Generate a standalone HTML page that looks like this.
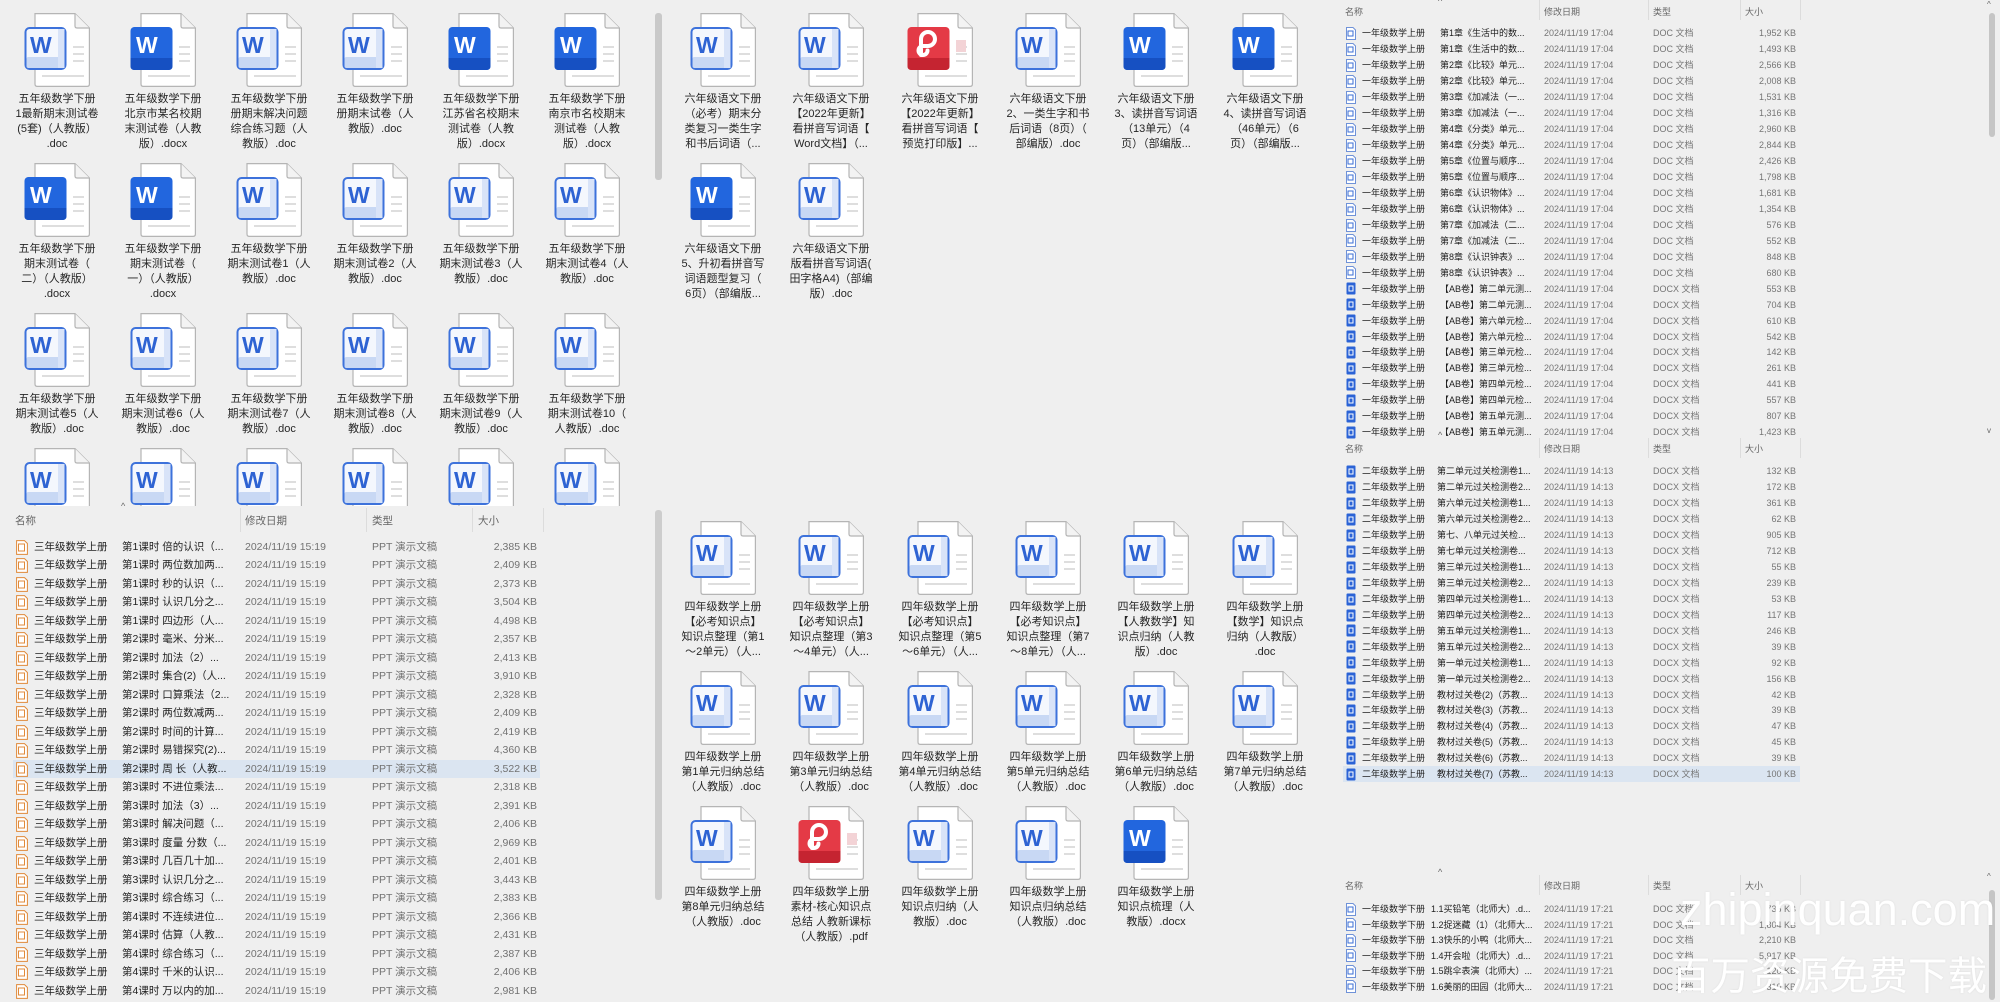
<!DOCTYPE html>
<html><head><meta charset="utf-8">
<style>
*{box-sizing:border-box}
body{margin:0;width:2000px;height:1000px;background:#efefef;position:relative;overflow:hidden;font-family:"Liberation Sans","Noto Sans CJK SC",sans-serif;color:#222}
.a{position:absolute}
.ic{position:absolute;width:66px;height:74px}
.lb{position:absolute;width:100px;text-align:center;font-size:11px;line-height:15px;color:#262626;white-space:nowrap}
.r{position:absolute;left:0;height:18px;white-space:nowrap}
.r>*{position:absolute;top:0;font-style:normal;font-weight:normal;text-decoration:none;quotes:none}
.r q:before,.r q:after{content:none}
.r svg{top:2px}
.L{position:absolute;left:0;top:0;width:660px;height:1000px;font-size:10.5px}
.L .r{height:18.5px;line-height:18.5px;width:545px}
.L svg{left:16px;width:12px;height:15px}
.L b{left:34px;color:#1e1e1e}.L u{left:122px;color:#1e1e1e}
.L em{left:245px;color:#727272}.L s{left:372px;color:#727272}
.L q{left:477px;width:60px;text-align:right;color:#727272}
.R{position:absolute;left:1330px;top:0;width:670px;height:1000px;font-size:9px}
.R .r{height:16px;line-height:16px;width:470px}
.R svg{left:16px;width:10px;height:13px;top:1.5px}
.R b{left:32px;color:#1e1e1e}.R u{left:110px;color:#1e1e1e}
.R em{left:214px;color:#757575}.R s{left:323px;color:#757575}
.R q{left:406px;width:60px;text-align:right;color:#757575}
.R .m u{left:107px}.R .bt u{left:101px}
.hd{position:absolute;color:#666;white-space:nowrap}
.sep{position:absolute;width:1px;background:#dcdcdc}
.sel{background:#dbe5f1}
</style></head><body>
<svg width="0" height="0" style="position:absolute">
<defs>
<symbol id="pg" viewBox="0 0 66 74">
<path d="M11 0.6H51L65.4 15V71Q65.4 73.4 63 73.4H13.4Q11 73.4 11 71Z" fill="#fff" stroke="#b5b5b5" stroke-width="1.2"/>
<path d="M51 0.6V13Q51 15 53 15H65.4" fill="#f3f3f3" stroke="#b5b5b5" stroke-width="1.2"/>
<rect x="49" y="33" width="11" height="2" fill="#dedede"/><rect x="49" y="40" width="11" height="2" fill="#dedede"/><rect x="49" y="47" width="11" height="2" fill="#dedede"/><rect x="18" y="62" width="42" height="2" fill="#dedede"/>
</symbol>
<symbol id="wl" viewBox="0 0 66 74">
<use href="#pg"/>
<rect x="1.5" y="15" width="40" height="41" rx="4" fill="#f4f7fd" stroke="#3d72db" stroke-width="2"/>
<rect x="2.5" y="44" width="38" height="11" rx="2" fill="#c8d8f4"/>
<rect x="34" y="16" width="6.5" height="39" fill="#d8e3f8"/>
<text x="6" y="40" font-family="Liberation Sans" font-weight="bold" font-size="23" fill="#2e63d3">W</text>
</symbol>
<symbol id="ws" viewBox="0 0 66 74">
<use href="#pg"/>
<rect x="0.5" y="14" width="42" height="43" rx="4" fill="#2266de"/>
<path d="M0.5 45H42.5V53Q42.5 57 38.5 57H4.5Q0.5 57 0.5 53Z" fill="#1650c2"/>
<text x="6" y="40" font-family="Liberation Sans" font-weight="bold" font-size="23" fill="#fff">W</text>
</symbol>
<symbol id="pd" viewBox="0 0 66 74">
<use href="#pg"/>
<rect x="49" y="27" width="10" height="12" fill="#f3d3d6"/>
<rect x="0.5" y="14" width="42" height="43" rx="4" fill="#e43a46"/>
<path d="M0.5 45H42.5V53Q42.5 57 38.5 57H4.5Q0.5 57 0.5 53Z" fill="#c52431"/>
<path d="M14 42V26A7 7 0 1 1 21 33H16A4.5 4.5 0 1 0 20.5 37.5" fill="none" stroke="#fff" stroke-width="4" stroke-linecap="round"/>
</symbol>
<symbol id="sp" viewBox="0 0 12 15"><path d="M0.6 0.6H8.5L11.4 3.5V14.4H0.6Z" fill="#fff" stroke="#e08a3a"/><rect x="2.5" y="4" width="6" height="7" fill="none" stroke="#e08a3a"/></symbol>
<symbol id="sd" viewBox="0 0 10 13"><path d="M0.5 0.5H7L9.5 3V12.5H0.5Z" fill="#fff" stroke="#6f92d8"/><rect x="2" y="4" width="5" height="5" fill="none" stroke="#3a6dd6"/></symbol>
<symbol id="sx" viewBox="0 0 10 13"><rect x="0.5" y="0.5" width="9" height="12" rx="1" fill="#2b63d6"/><rect x="2.5" y="3.5" width="5" height="6" fill="#fff"/><rect x="3.5" y="4.5" width="3" height="4" fill="#2b63d6"/></symbol>
</defs></svg>

<!-- LEFT TOP ICON GRID -->
<div class="a" style="left:0;top:0;width:650px;height:506px;overflow:hidden">
<svg class="ic" style="left:24px;top:13px"><use href="#wl"/></svg><div class="lb" style="left:7px;top:92px">五年级数学下册<br>1最新期末测试卷<br>(5套)（人教版）<br>.doc</div>
<svg class="ic" style="left:130px;top:13px"><use href="#ws"/></svg><div class="lb" style="left:113px;top:92px">五年级数学下册<br>北京市某名校期<br>末测试卷（人教<br>版）.docx</div>
<svg class="ic" style="left:236px;top:13px"><use href="#wl"/></svg><div class="lb" style="left:219px;top:92px">五年级数学下册<br>册期末解决问题<br>综合练习题（人<br>教版）.doc</div>
<svg class="ic" style="left:342px;top:13px"><use href="#wl"/></svg><div class="lb" style="left:325px;top:92px">五年级数学下册<br>册期末试卷（人<br>教版）.doc</div>
<svg class="ic" style="left:448px;top:13px"><use href="#ws"/></svg><div class="lb" style="left:431px;top:92px">五年级数学下册<br>江苏省名校期末<br>测试卷（人教<br>版）.docx</div>
<svg class="ic" style="left:554px;top:13px"><use href="#ws"/></svg><div class="lb" style="left:537px;top:92px">五年级数学下册<br>南京市名校期末<br>测试卷（人教<br>版）.docx</div>

<svg class="ic" style="left:24px;top:163px"><use href="#ws"/></svg><div class="lb" style="left:7px;top:242px">五年级数学下册<br>期末测试卷（<br>二）（人教版）<br>.docx</div>
<svg class="ic" style="left:130px;top:163px"><use href="#ws"/></svg><div class="lb" style="left:113px;top:242px">五年级数学下册<br>期末测试卷（<br>一）（人教版）<br>.docx</div>
<svg class="ic" style="left:236px;top:163px"><use href="#wl"/></svg><div class="lb" style="left:219px;top:242px">五年级数学下册<br>期末测试卷1（人<br>教版）.doc</div>
<svg class="ic" style="left:342px;top:163px"><use href="#wl"/></svg><div class="lb" style="left:325px;top:242px">五年级数学下册<br>期末测试卷2（人<br>教版）.doc</div>
<svg class="ic" style="left:448px;top:163px"><use href="#wl"/></svg><div class="lb" style="left:431px;top:242px">五年级数学下册<br>期末测试卷3（人<br>教版）.doc</div>
<svg class="ic" style="left:554px;top:163px"><use href="#wl"/></svg><div class="lb" style="left:537px;top:242px">五年级数学下册<br>期末测试卷4（人<br>教版）.doc</div>

<svg class="ic" style="left:24px;top:313px"><use href="#wl"/></svg><div class="lb" style="left:7px;top:392px">五年级数学下册<br>期末测试卷5（人<br>教版）.doc</div>
<svg class="ic" style="left:130px;top:313px"><use href="#wl"/></svg><div class="lb" style="left:113px;top:392px">五年级数学下册<br>期末测试卷6（人<br>教版）.doc</div>
<svg class="ic" style="left:236px;top:313px"><use href="#wl"/></svg><div class="lb" style="left:219px;top:392px">五年级数学下册<br>期末测试卷7（人<br>教版）.doc</div>
<svg class="ic" style="left:342px;top:313px"><use href="#wl"/></svg><div class="lb" style="left:325px;top:392px">五年级数学下册<br>期末测试卷8（人<br>教版）.doc</div>
<svg class="ic" style="left:448px;top:313px"><use href="#wl"/></svg><div class="lb" style="left:431px;top:392px">五年级数学下册<br>期末测试卷9（人<br>教版）.doc</div>
<svg class="ic" style="left:554px;top:313px"><use href="#wl"/></svg><div class="lb" style="left:537px;top:392px">五年级数学下册<br>期末测试卷10（<br>人教版）.doc</div>

<svg class="ic" style="left:24px;top:448px"><use href="#wl"/></svg>
<svg class="ic" style="left:130px;top:448px"><use href="#wl"/></svg>
<svg class="ic" style="left:236px;top:448px"><use href="#wl"/></svg>
<svg class="ic" style="left:342px;top:448px"><use href="#wl"/></svg>
<svg class="ic" style="left:448px;top:448px"><use href="#wl"/></svg>
<svg class="ic" style="left:554px;top:448px"><use href="#wl"/></svg>
</div>

<!-- scrollbars left/mid boundary -->
<div class="a" style="left:655px;top:13px;width:7px;height:167px;background:#c9c9c9;border-radius:3px"></div>
<div class="a" style="left:655px;top:510px;width:7px;height:390px;background:#cdcdcd;border-radius:3px"></div>

<!-- LEFT LIST -->
<div class="L">
<div class="hd" style="left:15px;top:513px">名称</div>
<div class="hd" style="left:121px;top:501px;font-size:9px">^</div>
<div class="hd" style="left:245px;top:513px">修改日期</div>
<div class="hd" style="left:372px;top:513px">类型</div>
<div class="hd" style="left:478px;top:513px">大小</div>
<div class="sep" style="left:240px;top:508px;height:24px"></div>
<div class="sep" style="left:366px;top:508px;height:24px"></div>
<div class="sep" style="left:472px;top:508px;height:24px"></div>
<div class="sep" style="left:543px;top:508px;height:24px"></div>
<div class="a sel" style="left:13px;top:759.5px;width:527px;height:18.5px"></div>
<div class="r" style="top:537.5px"><svg><use href="#sp"/></svg><b>三年级数学上册</b><u>第1课时 倍的认识（...</u><em>2024/11/19 15:19</em><s>PPT 演示文稿</s><q>2,385 KB</q></div>
<div class="r" style="top:556px"><svg><use href="#sp"/></svg><b>三年级数学上册</b><u>第1课时 两位数加两...</u><em>2024/11/19 15:19</em><s>PPT 演示文稿</s><q>2,409 KB</q></div>
<div class="r" style="top:574.5px"><svg><use href="#sp"/></svg><b>三年级数学上册</b><u>第1课时 秒的认识（...</u><em>2024/11/19 15:19</em><s>PPT 演示文稿</s><q>2,373 KB</q></div>
<div class="r" style="top:593px"><svg><use href="#sp"/></svg><b>三年级数学上册</b><u>第1课时 认识几分之...</u><em>2024/11/19 15:19</em><s>PPT 演示文稿</s><q>3,504 KB</q></div>
<div class="r" style="top:611.5px"><svg><use href="#sp"/></svg><b>三年级数学上册</b><u>第1课时 四边形（人...</u><em>2024/11/19 15:19</em><s>PPT 演示文稿</s><q>4,498 KB</q></div>
<div class="r" style="top:630px"><svg><use href="#sp"/></svg><b>三年级数学上册</b><u>第2课时 毫米、分米...</u><em>2024/11/19 15:19</em><s>PPT 演示文稿</s><q>2,357 KB</q></div>
<div class="r" style="top:648.5px"><svg><use href="#sp"/></svg><b>三年级数学上册</b><u>第2课时 加法（2）...</u><em>2024/11/19 15:19</em><s>PPT 演示文稿</s><q>2,413 KB</q></div>
<div class="r" style="top:667px"><svg><use href="#sp"/></svg><b>三年级数学上册</b><u>第2课时 集合(2)（人...</u><em>2024/11/19 15:19</em><s>PPT 演示文稿</s><q>3,910 KB</q></div>
<div class="r" style="top:685.5px"><svg><use href="#sp"/></svg><b>三年级数学上册</b><u>第2课时 口算乘法（2...</u><em>2024/11/19 15:19</em><s>PPT 演示文稿</s><q>2,328 KB</q></div>
<div class="r" style="top:704px"><svg><use href="#sp"/></svg><b>三年级数学上册</b><u>第2课时 两位数减两...</u><em>2024/11/19 15:19</em><s>PPT 演示文稿</s><q>2,409 KB</q></div>
<div class="r" style="top:722.5px"><svg><use href="#sp"/></svg><b>三年级数学上册</b><u>第2课时 时间的计算...</u><em>2024/11/19 15:19</em><s>PPT 演示文稿</s><q>2,419 KB</q></div>
<div class="r" style="top:741px"><svg><use href="#sp"/></svg><b>三年级数学上册</b><u>第2课时 易错探究(2)...</u><em>2024/11/19 15:19</em><s>PPT 演示文稿</s><q>4,360 KB</q></div>
<div class="r" style="top:759.5px"><svg><use href="#sp"/></svg><b>三年级数学上册</b><u>第2课时 周 长（人教...</u><em>2024/11/19 15:19</em><s>PPT 演示文稿</s><q>3,522 KB</q></div>
<div class="r" style="top:778px"><svg><use href="#sp"/></svg><b>三年级数学上册</b><u>第3课时 不进位乘法...</u><em>2024/11/19 15:19</em><s>PPT 演示文稿</s><q>2,318 KB</q></div>
<div class="r" style="top:796.5px"><svg><use href="#sp"/></svg><b>三年级数学上册</b><u>第3课时 加法（3）...</u><em>2024/11/19 15:19</em><s>PPT 演示文稿</s><q>2,391 KB</q></div>
<div class="r" style="top:815px"><svg><use href="#sp"/></svg><b>三年级数学上册</b><u>第3课时 解决问题（...</u><em>2024/11/19 15:19</em><s>PPT 演示文稿</s><q>2,406 KB</q></div>
<div class="r" style="top:833.5px"><svg><use href="#sp"/></svg><b>三年级数学上册</b><u>第3课时 度量 分数（...</u><em>2024/11/19 15:19</em><s>PPT 演示文稿</s><q>2,969 KB</q></div>
<div class="r" style="top:852px"><svg><use href="#sp"/></svg><b>三年级数学上册</b><u>第3课时 几百几十加...</u><em>2024/11/19 15:19</em><s>PPT 演示文稿</s><q>2,401 KB</q></div>
<div class="r" style="top:870.5px"><svg><use href="#sp"/></svg><b>三年级数学上册</b><u>第3课时 认识几分之...</u><em>2024/11/19 15:19</em><s>PPT 演示文稿</s><q>3,443 KB</q></div>
<div class="r" style="top:889px"><svg><use href="#sp"/></svg><b>三年级数学上册</b><u>第3课时 综合练习（...</u><em>2024/11/19 15:19</em><s>PPT 演示文稿</s><q>2,383 KB</q></div>
<div class="r" style="top:907.5px"><svg><use href="#sp"/></svg><b>三年级数学上册</b><u>第4课时 不连续进位...</u><em>2024/11/19 15:19</em><s>PPT 演示文稿</s><q>2,366 KB</q></div>
<div class="r" style="top:926px"><svg><use href="#sp"/></svg><b>三年级数学上册</b><u>第4课时 估算（人教...</u><em>2024/11/19 15:19</em><s>PPT 演示文稿</s><q>2,431 KB</q></div>
<div class="r" style="top:944.5px"><svg><use href="#sp"/></svg><b>三年级数学上册</b><u>第4课时 综合练习（...</u><em>2024/11/19 15:19</em><s>PPT 演示文稿</s><q>2,387 KB</q></div>
<div class="r" style="top:963px"><svg><use href="#sp"/></svg><b>三年级数学上册</b><u>第4课时 千米的认识...</u><em>2024/11/19 15:19</em><s>PPT 演示文稿</s><q>2,406 KB</q></div>
<div class="r" style="top:981.5px"><svg><use href="#sp"/></svg><b>三年级数学上册</b><u>第4课时 万以内的加...</u><em>2024/11/19 15:19</em><s>PPT 演示文稿</s><q>2,981 KB</q></div>
</div>

<!-- MIDDLE TOP -->
<svg class="ic" style="left:690px;top:13px"><use href="#wl"/></svg><div class="lb" style="left:673px;top:92px">六年级语文下册<br>（必考）期末分<br>类复习一类生字<br>和书后词语（...</div>
<svg class="ic" style="left:798px;top:13px"><use href="#wl"/></svg><div class="lb" style="left:781px;top:92px">六年级语文下册<br>【2022年更新】<br>看拼音写词语【<br>Word文档】（...</div>
<svg class="ic" style="left:907px;top:13px"><use href="#pd"/></svg><div class="lb" style="left:890px;top:92px">六年级语文下册<br>【2022年更新】<br>看拼音写词语【<br>预览打印版】...</div>
<svg class="ic" style="left:1015px;top:13px"><use href="#wl"/></svg><div class="lb" style="left:998px;top:92px">六年级语文下册<br>2、一类生字和书<br>后词语（8页）（<br>部编版）.doc</div>
<svg class="ic" style="left:1123px;top:13px"><use href="#ws"/></svg><div class="lb" style="left:1106px;top:92px">六年级语文下册<br>3、读拼音写词语<br>（13单元）（4<br>页）（部编版...</div>
<svg class="ic" style="left:1232px;top:13px"><use href="#ws"/></svg><div class="lb" style="left:1215px;top:92px">六年级语文下册<br>4、读拼音写词语<br>（46单元）（6<br>页）（部编版...</div>
<svg class="ic" style="left:690px;top:163px"><use href="#ws"/></svg><div class="lb" style="left:673px;top:242px">六年级语文下册<br>5、升初看拼音写<br>词语题型复习（<br>6页）（部编版...</div>
<svg class="ic" style="left:798px;top:163px"><use href="#wl"/></svg><div class="lb" style="left:781px;top:242px">六年级语文下册<br>版看拼音写词语(<br>田字格A4)（部编<br>版）.doc</div>

<!-- MIDDLE BOTTOM -->
<svg class="ic" style="left:690px;top:521px"><use href="#wl"/></svg><div class="lb" style="left:673px;top:600px">四年级数学上册<br>【必考知识点】<br>知识点整理（第1<br>～2单元）（人...</div>
<svg class="ic" style="left:798px;top:521px"><use href="#wl"/></svg><div class="lb" style="left:781px;top:600px">四年级数学上册<br>【必考知识点】<br>知识点整理（第3<br>～4单元）（人...</div>
<svg class="ic" style="left:907px;top:521px"><use href="#wl"/></svg><div class="lb" style="left:890px;top:600px">四年级数学上册<br>【必考知识点】<br>知识点整理（第5<br>～6单元）（人...</div>
<svg class="ic" style="left:1015px;top:521px"><use href="#wl"/></svg><div class="lb" style="left:998px;top:600px">四年级数学上册<br>【必考知识点】<br>知识点整理（第7<br>～8单元）（人...</div>
<svg class="ic" style="left:1123px;top:521px"><use href="#wl"/></svg><div class="lb" style="left:1106px;top:600px">四年级数学上册<br>【人教数学】知<br>识点归纳（人教<br>版）.doc</div>
<svg class="ic" style="left:1232px;top:521px"><use href="#wl"/></svg><div class="lb" style="left:1215px;top:600px">四年级数学上册<br>【数学】知识点<br>归纳（人教版）<br>.doc</div>

<svg class="ic" style="left:690px;top:671px"><use href="#wl"/></svg><div class="lb" style="left:673px;top:750px">四年级数学上册<br>第1单元归纳总结<br>（人教版）.doc</div>
<svg class="ic" style="left:798px;top:671px"><use href="#wl"/></svg><div class="lb" style="left:781px;top:750px">四年级数学上册<br>第3单元归纳总结<br>（人教版）.doc</div>
<svg class="ic" style="left:907px;top:671px"><use href="#wl"/></svg><div class="lb" style="left:890px;top:750px">四年级数学上册<br>第4单元归纳总结<br>（人教版）.doc</div>
<svg class="ic" style="left:1015px;top:671px"><use href="#wl"/></svg><div class="lb" style="left:998px;top:750px">四年级数学上册<br>第5单元归纳总结<br>（人教版）.doc</div>
<svg class="ic" style="left:1123px;top:671px"><use href="#wl"/></svg><div class="lb" style="left:1106px;top:750px">四年级数学上册<br>第6单元归纳总结<br>（人教版）.doc</div>
<svg class="ic" style="left:1232px;top:671px"><use href="#wl"/></svg><div class="lb" style="left:1215px;top:750px">四年级数学上册<br>第7单元归纳总结<br>（人教版）.doc</div>

<svg class="ic" style="left:690px;top:806px"><use href="#wl"/></svg><div class="lb" style="left:673px;top:885px">四年级数学上册<br>第8单元归纳总结<br>（人教版）.doc</div>
<svg class="ic" style="left:798px;top:806px"><use href="#pd"/></svg><div class="lb" style="left:781px;top:885px">四年级数学上册<br>素材-核心知识点<br>总结 人教新课标<br>（人教版）.pdf</div>
<svg class="ic" style="left:907px;top:806px"><use href="#wl"/></svg><div class="lb" style="left:890px;top:885px">四年级数学上册<br>知识点归纳（人<br>教版）.doc</div>
<svg class="ic" style="left:1015px;top:806px"><use href="#wl"/></svg><div class="lb" style="left:998px;top:885px">四年级数学上册<br>知识点归纳总结<br>（人教版）.doc</div>
<svg class="ic" style="left:1123px;top:806px"><use href="#ws"/></svg><div class="lb" style="left:1106px;top:885px">四年级数学上册<br>知识点梳理（人<br>教版）.docx</div>

<!-- RIGHT -->
<div class="R">
<div class="hd" style="left:15px;top:5px">名称</div>
<div class="hd" style="left:214px;top:5px">修改日期</div>
<div class="hd" style="left:323px;top:5px">类型</div>
<div class="hd" style="left:415px;top:5px">大小</div>
<div class="hd" style="left:108px;top:-4px">^</div>
<div class="sep" style="left:209px;top:0;height:20px"></div><div class="sep" style="left:318px;top:0;height:20px"></div><div class="sep" style="left:410px;top:0;height:20px"></div><div class="sep" style="left:470px;top:0;height:20px"></div>
<div class="a" style="left:659px;top:13px;width:6px;height:124px;background:#c5c5c5;border-radius:3px"></div>
<div class="hd" style="left:657px;top:0px;font-size:8px">^</div>
<div class="hd" style="left:657px;top:426px;font-size:8px">v</div>

<div class="r" style="top:25px"><svg><use href="#sd"/></svg><b>一年级数学上册</b><u>第1章《生活中的数...</u><em>2024/11/19 17:04</em><s>DOC 文档</s><q>1,952 KB</q></div>
<div class="r" style="top:41px"><svg><use href="#sd"/></svg><b>一年级数学上册</b><u>第1章《生活中的数...</u><em>2024/11/19 17:04</em><s>DOC 文档</s><q>1,493 KB</q></div>
<div class="r" style="top:57px"><svg><use href="#sd"/></svg><b>一年级数学上册</b><u>第2章《比较》单元...</u><em>2024/11/19 17:04</em><s>DOC 文档</s><q>2,566 KB</q></div>
<div class="r" style="top:73px"><svg><use href="#sd"/></svg><b>一年级数学上册</b><u>第2章《比较》单元...</u><em>2024/11/19 17:04</em><s>DOC 文档</s><q>2,008 KB</q></div>
<div class="r" style="top:89px"><svg><use href="#sd"/></svg><b>一年级数学上册</b><u>第3章《加减法（一...</u><em>2024/11/19 17:04</em><s>DOC 文档</s><q>1,531 KB</q></div>
<div class="r" style="top:105px"><svg><use href="#sd"/></svg><b>一年级数学上册</b><u>第3章《加减法（一...</u><em>2024/11/19 17:04</em><s>DOC 文档</s><q>1,316 KB</q></div>
<div class="r" style="top:121px"><svg><use href="#sd"/></svg><b>一年级数学上册</b><u>第4章《分类》单元...</u><em>2024/11/19 17:04</em><s>DOC 文档</s><q>2,960 KB</q></div>
<div class="r" style="top:137px"><svg><use href="#sd"/></svg><b>一年级数学上册</b><u>第4章《分类》单元...</u><em>2024/11/19 17:04</em><s>DOC 文档</s><q>2,844 KB</q></div>
<div class="r" style="top:153px"><svg><use href="#sd"/></svg><b>一年级数学上册</b><u>第5章《位置与顺序...</u><em>2024/11/19 17:04</em><s>DOC 文档</s><q>2,426 KB</q></div>
<div class="r" style="top:169px"><svg><use href="#sd"/></svg><b>一年级数学上册</b><u>第5章《位置与顺序...</u><em>2024/11/19 17:04</em><s>DOC 文档</s><q>1,798 KB</q></div>
<div class="r" style="top:185px"><svg><use href="#sd"/></svg><b>一年级数学上册</b><u>第6章《认识物体》...</u><em>2024/11/19 17:04</em><s>DOC 文档</s><q>1,681 KB</q></div>
<div class="r" style="top:201px"><svg><use href="#sd"/></svg><b>一年级数学上册</b><u>第6章《认识物体》...</u><em>2024/11/19 17:04</em><s>DOC 文档</s><q>1,354 KB</q></div>
<div class="r" style="top:217px"><svg><use href="#sd"/></svg><b>一年级数学上册</b><u>第7章《加减法（二...</u><em>2024/11/19 17:04</em><s>DOC 文档</s><q>576 KB</q></div>
<div class="r" style="top:232.5px"><svg><use href="#sd"/></svg><b>一年级数学上册</b><u>第7章《加减法（二...</u><em>2024/11/19 17:04</em><s>DOC 文档</s><q>552 KB</q></div>
<div class="r" style="top:248.5px"><svg><use href="#sd"/></svg><b>一年级数学上册</b><u>第8章《认识钟表》...</u><em>2024/11/19 17:04</em><s>DOC 文档</s><q>848 KB</q></div>
<div class="r" style="top:264.5px"><svg><use href="#sd"/></svg><b>一年级数学上册</b><u>第8章《认识钟表》...</u><em>2024/11/19 17:04</em><s>DOC 文档</s><q>680 KB</q></div>
<div class="r" style="top:280.5px"><svg><use href="#sx"/></svg><b>一年级数学上册</b><u>【AB卷】第二单元测...</u><em>2024/11/19 17:04</em><s>DOCX 文档</s><q>553 KB</q></div>
<div class="r" style="top:296.5px"><svg><use href="#sx"/></svg><b>一年级数学上册</b><u>【AB卷】第二单元测...</u><em>2024/11/19 17:04</em><s>DOCX 文档</s><q>704 KB</q></div>
<div class="r" style="top:312.5px"><svg><use href="#sx"/></svg><b>一年级数学上册</b><u>【AB卷】第六单元检...</u><em>2024/11/19 17:04</em><s>DOCX 文档</s><q>610 KB</q></div>
<div class="r" style="top:328.5px"><svg><use href="#sx"/></svg><b>一年级数学上册</b><u>【AB卷】第六单元检...</u><em>2024/11/19 17:04</em><s>DOCX 文档</s><q>542 KB</q></div>
<div class="r" style="top:344px"><svg><use href="#sx"/></svg><b>一年级数学上册</b><u>【AB卷】第三单元检...</u><em>2024/11/19 17:04</em><s>DOCX 文档</s><q>142 KB</q></div>
<div class="r" style="top:360px"><svg><use href="#sx"/></svg><b>一年级数学上册</b><u>【AB卷】第三单元检...</u><em>2024/11/19 17:04</em><s>DOCX 文档</s><q>261 KB</q></div>
<div class="r" style="top:376px"><svg><use href="#sx"/></svg><b>一年级数学上册</b><u>【AB卷】第四单元检...</u><em>2024/11/19 17:04</em><s>DOCX 文档</s><q>441 KB</q></div>
<div class="r" style="top:392px"><svg><use href="#sx"/></svg><b>一年级数学上册</b><u>【AB卷】第四单元检...</u><em>2024/11/19 17:04</em><s>DOCX 文档</s><q>557 KB</q></div>
<div class="r" style="top:408px"><svg><use href="#sx"/></svg><b>一年级数学上册</b><u>【AB卷】第五单元测...</u><em>2024/11/19 17:04</em><s>DOCX 文档</s><q>807 KB</q></div>
<div class="r" style="top:424px"><svg><use href="#sx"/></svg><b>一年级数学上册</b><u>【AB卷】第五单元测...</u><em>2024/11/19 17:04</em><s>DOCX 文档</s><q>1,423 KB</q></div>

<!-- mid list -->
<div class="a" style="left:0;top:440px;width:670px;height:450px;background:#efefef"></div>
<div class="hd" style="left:15px;top:442px">名称</div>
<div class="hd" style="left:214px;top:442px">修改日期</div>
<div class="hd" style="left:323px;top:442px">类型</div>
<div class="hd" style="left:415px;top:442px">大小</div>
<div class="hd" style="left:108px;top:430px">^</div>
<div class="sep" style="left:209px;top:438px;height:20px"></div><div class="sep" style="left:318px;top:438px;height:20px"></div><div class="sep" style="left:410px;top:438px;height:20px"></div><div class="sep" style="left:470px;top:438px;height:20px"></div>
<div class="a sel" style="left:13px;top:766px;width:457px;height:16px"></div>
<div class="r m" style="top:463px"><svg><use href="#sx"/></svg><b>二年级数学上册</b><u>第二单元过关检测卷1...</u><em>2024/11/19 14:13</em><s>DOCX 文档</s><q>132 KB</q></div>
<div class="r m" style="top:479px"><svg><use href="#sx"/></svg><b>二年级数学上册</b><u>第二单元过关检测卷2...</u><em>2024/11/19 14:13</em><s>DOCX 文档</s><q>172 KB</q></div>
<div class="r m" style="top:495px"><svg><use href="#sx"/></svg><b>二年级数学上册</b><u>第六单元过关检测卷1...</u><em>2024/11/19 14:13</em><s>DOCX 文档</s><q>361 KB</q></div>
<div class="r m" style="top:511px"><svg><use href="#sx"/></svg><b>二年级数学上册</b><u>第六单元过关检测卷2...</u><em>2024/11/19 14:13</em><s>DOCX 文档</s><q>62 KB</q></div>
<div class="r m" style="top:527px"><svg><use href="#sx"/></svg><b>二年级数学上册</b><u>第七、八单元过关检...</u><em>2024/11/19 14:13</em><s>DOCX 文档</s><q>905 KB</q></div>
<div class="r m" style="top:543px"><svg><use href="#sx"/></svg><b>二年级数学上册</b><u>第七单元过关检测卷...</u><em>2024/11/19 14:13</em><s>DOCX 文档</s><q>712 KB</q></div>
<div class="r m" style="top:559px"><svg><use href="#sx"/></svg><b>二年级数学上册</b><u>第三单元过关检测卷1...</u><em>2024/11/19 14:13</em><s>DOCX 文档</s><q>55 KB</q></div>
<div class="r m" style="top:575px"><svg><use href="#sx"/></svg><b>二年级数学上册</b><u>第三单元过关检测卷2...</u><em>2024/11/19 14:13</em><s>DOCX 文档</s><q>239 KB</q></div>
<div class="r m" style="top:591px"><svg><use href="#sx"/></svg><b>二年级数学上册</b><u>第四单元过关检测卷1...</u><em>2024/11/19 14:13</em><s>DOCX 文档</s><q>53 KB</q></div>
<div class="r m" style="top:607px"><svg><use href="#sx"/></svg><b>二年级数学上册</b><u>第四单元过关检测卷2...</u><em>2024/11/19 14:13</em><s>DOCX 文档</s><q>117 KB</q></div>
<div class="r m" style="top:622.5px"><svg><use href="#sx"/></svg><b>二年级数学上册</b><u>第五单元过关检测卷1...</u><em>2024/11/19 14:13</em><s>DOCX 文档</s><q>246 KB</q></div>
<div class="r m" style="top:638.5px"><svg><use href="#sx"/></svg><b>二年级数学上册</b><u>第五单元过关检测卷2...</u><em>2024/11/19 14:13</em><s>DOCX 文档</s><q>39 KB</q></div>
<div class="r m" style="top:654.5px"><svg><use href="#sx"/></svg><b>二年级数学上册</b><u>第一单元过关检测卷1...</u><em>2024/11/19 14:13</em><s>DOCX 文档</s><q>92 KB</q></div>
<div class="r m" style="top:670.5px"><svg><use href="#sx"/></svg><b>二年级数学上册</b><u>第一单元过关检测卷2...</u><em>2024/11/19 14:13</em><s>DOCX 文档</s><q>156 KB</q></div>
<div class="r m" style="top:686.5px"><svg><use href="#sx"/></svg><b>二年级数学上册</b><u>教材过关卷(2)（苏教...</u><em>2024/11/19 14:13</em><s>DOCX 文档</s><q>42 KB</q></div>
<div class="r m" style="top:702px"><svg><use href="#sx"/></svg><b>二年级数学上册</b><u>教材过关卷(3)（苏教...</u><em>2024/11/19 14:13</em><s>DOCX 文档</s><q>39 KB</q></div>
<div class="r m" style="top:718px"><svg><use href="#sx"/></svg><b>二年级数学上册</b><u>教材过关卷(4)（苏教...</u><em>2024/11/19 14:13</em><s>DOCX 文档</s><q>47 KB</q></div>
<div class="r m" style="top:734px"><svg><use href="#sx"/></svg><b>二年级数学上册</b><u>教材过关卷(5)（苏教...</u><em>2024/11/19 14:13</em><s>DOCX 文档</s><q>45 KB</q></div>
<div class="r m" style="top:750px"><svg><use href="#sx"/></svg><b>二年级数学上册</b><u>教材过关卷(6)（苏教...</u><em>2024/11/19 14:13</em><s>DOCX 文档</s><q>39 KB</q></div>
<div class="r m" style="top:766px"><svg><use href="#sx"/></svg><b>二年级数学上册</b><u>教材过关卷(7)（苏教...</u><em>2024/11/19 14:13</em><s>DOCX 文档</s><q>100 KB</q></div>

<!-- bottom list -->
<div class="hd" style="left:15px;top:879px">名称</div>
<div class="hd" style="left:214px;top:879px">修改日期</div>
<div class="hd" style="left:323px;top:879px">类型</div>
<div class="hd" style="left:415px;top:879px">大小</div>
<div class="hd" style="left:108px;top:867px">^</div>
<div class="sep" style="left:209px;top:875px;height:20px"></div><div class="sep" style="left:318px;top:875px;height:20px"></div><div class="sep" style="left:410px;top:875px;height:20px"></div><div class="sep" style="left:470px;top:875px;height:20px"></div>
<div class="a" style="left:659px;top:890px;width:6px;height:110px;background:#c5c5c5;border-radius:3px"></div>
<div class="hd" style="left:657px;top:872px;font-size:8px">^</div>
<div class="r bt" style="top:901px"><svg><use href="#sd"/></svg><b>一年级数学下册</b><u>1.1买铅笔（北师大）.d...</u><em>2024/11/19 17:21</em><s>DOC 文档</s><q>735 KB</q></div>
<div class="r bt" style="top:916.5px"><svg><use href="#sd"/></svg><b>一年级数学下册</b><u>1.2捉迷藏（1）（北师大...</u><em>2024/11/19 17:21</em><s>DOC 文档</s><q>1,804 KB</q></div>
<div class="r bt" style="top:932px"><svg><use href="#sd"/></svg><b>一年级数学下册</b><u>1.3快乐的小鸭（北师大...</u><em>2024/11/19 17:21</em><s>DOC 文档</s><q>2,210 KB</q></div>
<div class="r bt" style="top:947.5px"><svg><use href="#sd"/></svg><b>一年级数学下册</b><u>1.4开会啦（北师大）.d...</u><em>2024/11/19 17:21</em><s>DOC 文档</s><q>5,917 KB</q></div>
<div class="r bt" style="top:963px"><svg><use href="#sd"/></svg><b>一年级数学下册</b><u>1.5跳伞表演（北师大）...</u><em>2024/11/19 17:21</em><s>DOC 文档</s><q>120 KB</q></div>
<div class="r bt" style="top:978.5px"><svg><use href="#sd"/></svg><b>一年级数学下册</b><u>1.6美丽的田园（北师大...</u><em>2024/11/19 17:21</em><s>DOC 文档</s><q>310 KB</q></div>
</div>

<!-- watermark -->
<div class="a" style="left:1680px;top:882px;font-size:45px;line-height:56px;color:#fff;white-space:nowrap;text-shadow:0 0 2px rgba(0,0,0,0.08)">zhipinquan.com</div>
<div class="a" style="left:1671px;top:952px;font-size:39.5px;line-height:44px;color:#fff;white-space:nowrap;font-family:'Noto Sans CJK SC',sans-serif;text-shadow:0 0 2px rgba(0,0,0,0.08)">百万资源免费下载</div>
</body></html>
